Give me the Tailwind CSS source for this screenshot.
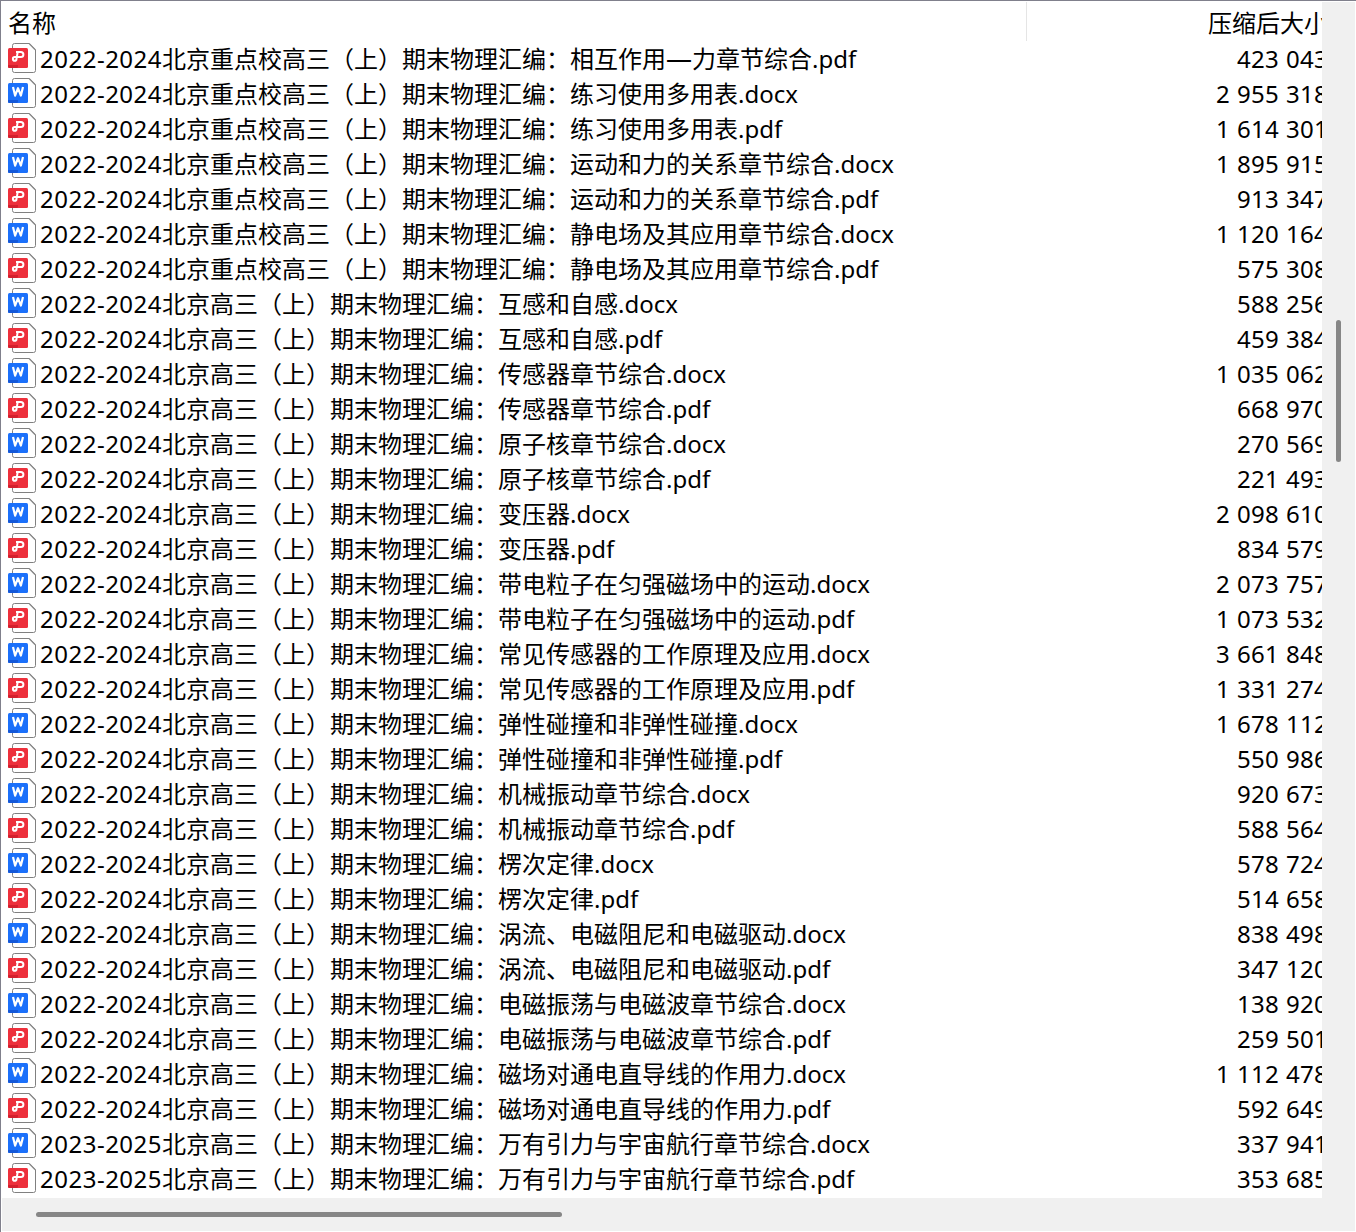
<!DOCTYPE html>
<html lang="zh-CN">
<head>
  <meta charset="UTF-8">
  <meta name="viewport" content="width=device-width, initial-scale=1.0">
  <title>压缩文件列表</title>
  <script src="https://cdn.jsdelivr.net/npm/@tailwindcss/browser@4"></script>
</head>
<body class="bg-white overflow-hidden">
  <!-- Ícones dos arquivos -->
  <svg class="hidden">
    <symbol id="page" viewBox="0 0 28 30">
      <path d="M4.5 5V2.5a2 2 0 0 1 2-2H21.5L27.5 6.5V27.5a2 2 0 0 1-2 2H6.5a2 2 0 0 1-2-2V24" fill="#fff" stroke="#808080" stroke-width="1"/>
      <path d="M21.3 .8L27.2 6.7" stroke="#8c8c8c" stroke-width="1.3"/>
    </symbol>
    <symbol id="pdf" viewBox="0 0 28 30">
      <use href="#page"/>
      <rect y="5" width="20" height="20" rx="1.5" fill="#ed303c"/>
      <path d="M0 22H10V23.5Q10 25 8.5 25H1.5Q0 25 0 23.5Z" fill="#d3202e"/>
      <path d="M8 8.9H12.8a2.6 2.6 0 0 1 0 5.2H6.7a1.8 1.8 0 1 0 1.8 1.8L9.6 9.6" fill="none" stroke="#fff" stroke-width="2" stroke-linejoin="round"/>
    </symbol>
    <symbol id="docx" viewBox="0 0 28 30">
      <use href="#page"/>
      <rect y="5" width="20" height="20" rx="1.5" fill="#1b70fa"/>
      <path d="M0 22H10V23.5Q10 25 8.5 25H1.5Q0 25 0 23.5Z" fill="#1458d8"/>
      <path d="M5 9L7.1 17.6L10 10.2L12.9 17.6L15 9" fill="none" stroke="#fff" stroke-width="2.2" stroke-linejoin="round"/>
    </symbol>
  </svg>

  <div class="h-[1232px] w-[1356px] flex flex-col border-t border-l border-[#80808c] pr-px pb-px text-2xl leading-[35px] text-black font-['Noto_Sans','Noto_Sans_CJK_SC',sans-serif]">
    <div class="flex h-[1197px]">
      <div class="w-[1321px] overflow-hidden">
        <div class="flex h-[41px] whitespace-nowrap">
          <div class="w-[1026px] h-[39px] shrink-0 mt-px border-r border-[#e5e5e5] pl-[7px] pt-[3px]">名称</div>
          <div class="pl-[181px] pt-1">压缩后大小</div>
        </div>
        <ul id="fileList"></ul>
      </div>
      <div class="flex-1 mt-px bg-[#f0f0f0] pl-3.5 pt-[318px]">
        <div class="w-[5px] h-[142px] rounded-full bg-[#868686]"></div>
      </div>
    </div>
    <div class="flex-1 ml-px bg-[#f0f0f0] pl-[34px] pt-3.5">
      <div class="w-[526px] h-[5px] rounded-full bg-[#868686]"></div>
    </div>
  </div>

  <script>
    // ano, local, título, extensão, tamanho compactado
    const files = [
      ['2022-2024', '北京重点校高三', '相互作用<span class="text-[26px] leading-none">—</span>力章节综合', 'pdf', '423 043'],
      ['2022-2024', '北京重点校高三', '练习使用多用表', 'docx', '2 955 318'],
      ['2022-2024', '北京重点校高三', '练习使用多用表', 'pdf', '1 614 301'],
      ['2022-2024', '北京重点校高三', '运动和力的关系章节综合', 'docx', '1 895 915'],
      ['2022-2024', '北京重点校高三', '运动和力的关系章节综合', 'pdf', '913 347'],
      ['2022-2024', '北京重点校高三', '静电场及其应用章节综合', 'docx', '1 120 164'],
      ['2022-2024', '北京重点校高三', '静电场及其应用章节综合', 'pdf', '575 308'],
      ['2022-2024', '北京高三', '互感和自感', 'docx', '588 256'],
      ['2022-2024', '北京高三', '互感和自感', 'pdf', '459 384'],
      ['2022-2024', '北京高三', '传感器章节综合', 'docx', '1 035 062'],
      ['2022-2024', '北京高三', '传感器章节综合', 'pdf', '668 970'],
      ['2022-2024', '北京高三', '原子核章节综合', 'docx', '270 569'],
      ['2022-2024', '北京高三', '原子核章节综合', 'pdf', '221 493'],
      ['2022-2024', '北京高三', '变压器', 'docx', '2 098 610'],
      ['2022-2024', '北京高三', '变压器', 'pdf', '834 579'],
      ['2022-2024', '北京高三', '带电粒子在匀强磁场中的运动', 'docx', '2 073 757'],
      ['2022-2024', '北京高三', '带电粒子在匀强磁场中的运动', 'pdf', '1 073 532'],
      ['2022-2024', '北京高三', '常见传感器的工作原理及应用', 'docx', '3 661 848'],
      ['2022-2024', '北京高三', '常见传感器的工作原理及应用', 'pdf', '1 331 274'],
      ['2022-2024', '北京高三', '弹性碰撞和非弹性碰撞', 'docx', '1 678 112'],
      ['2022-2024', '北京高三', '弹性碰撞和非弹性碰撞', 'pdf', '550 986'],
      ['2022-2024', '北京高三', '机械振动章节综合', 'docx', '920 673'],
      ['2022-2024', '北京高三', '机械振动章节综合', 'pdf', '588 564'],
      ['2022-2024', '北京高三', '楞次定律', 'docx', '578 724'],
      ['2022-2024', '北京高三', '楞次定律', 'pdf', '514 658'],
      ['2022-2024', '北京高三', '涡流、电磁阻尼和电磁驱动', 'docx', '838 498'],
      ['2022-2024', '北京高三', '涡流、电磁阻尼和电磁驱动', 'pdf', '347 120'],
      ['2022-2024', '北京高三', '电磁振荡与电磁波章节综合', 'docx', '138 920'],
      ['2022-2024', '北京高三', '电磁振荡与电磁波章节综合', 'pdf', '259 501'],
      ['2022-2024', '北京高三', '磁场对通电直导线的作用力', 'docx', '1 112 478'],
      ['2022-2024', '北京高三', '磁场对通电直导线的作用力', 'pdf', '592 649'],
      ['2023-2025', '北京高三', '万有引力与宇宙航行章节综合', 'docx', '337 941'],
      ['2023-2025', '北京高三', '万有引力与宇宙航行章节综合', 'pdf', '353 685'],
    ];

    const fileList = document.getElementById('fileList');

    for (const [years, place, title, ext, size] of files) {
      const row = document.createElement('li');
      row.className = "flex h-[35px] w-[1327px] pl-[7px] leading-[33px] whitespace-nowrap";
      row.innerHTML = `
        <svg class="w-7 h-[30px] mt-px shrink-0"><use href="#${ext}"/></svg>
        <span class="inline-block w-[122px] ml-1 shrink-0 tracking-[0.5px]">${years}</span>
        <span>${place}（上）期末物理汇编：${title}.${ext}</span>
        <span class="ml-auto tracking-[0.27px] [word-spacing:0.5px]">${size}</span>
      `;
      fileList.appendChild(row);
    }
  </script>
</body>
</html>
